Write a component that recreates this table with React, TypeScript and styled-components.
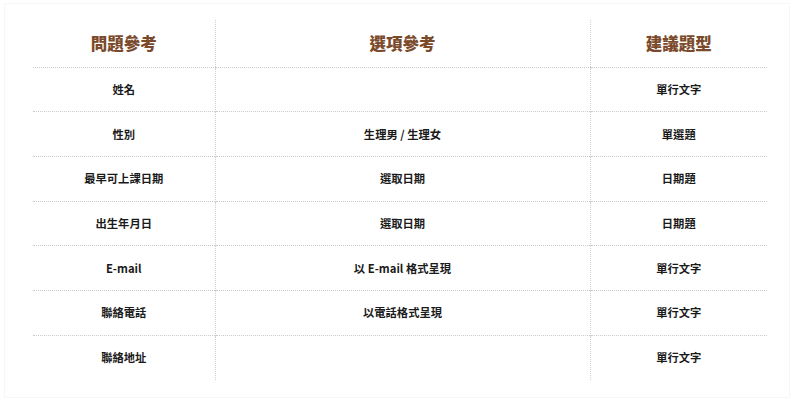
import React from "react";
import styled, { createGlobalStyle } from "styled-components";

const GlobalStyle = createGlobalStyle`
  html, body {
    margin: 0;
    padding: 0;
    background: #ffffff;
  }
  body {
    font-family: "Noto Sans CJK TC", "Noto Sans", sans-serif;
    color: #1a1a1a;
  }
`;

const Card = styled.div`
  box-sizing: border-box;
  width: 786px;
  height: 395px;
  margin: 3px 0 0 4px;
  padding: 16px 0 0 28px;
  border: 1px solid #f6f6f8;
  background: #ffffff;
`;

const Table = styled.table`
  width: 734px;
  border-collapse: collapse;
  table-layout: fixed;
`;

const HeadCell = styled.th<{ $w: number }>`
  width: ${(p) => p.$w}px;
  height: 47px;
  padding: 0 0 1px;
  box-sizing: border-box;
  font-size: 16.5px;
  font-weight: 900;
  color: #7b4a2b;
  text-align: center;
  border-bottom: 1px dotted #cacaca;
  & + & {
    border-left: 1px dotted #d0d0d0;
  }
`;

const Row = styled.tr`
  & + & td {
    border-top: 1px dotted #cacaca;
  }
`;

const Cell = styled.td`
  height: 44.7px;
  padding: 0 0 1px;
  box-sizing: border-box;
  font-size: 11.3px;
  font-weight: 700;
  color: #1a1a1a;
  text-align: center;
  vertical-align: middle;
  & + & {
    border-left: 1px dotted #d0d0d0;
  }
`;

const rows: [string, string, string][] = [
  ["姓名", "", "單行文字"],
  ["性別", "生理男 / 生理女", "單選題"],
  ["最早可上課日期", "選取日期", "日期題"],
  ["出生年月日", "選取日期", "日期題"],
  ["E-mail", "以 E-mail 格式呈現", "單行文字"],
  ["聯絡電話", "以電話格式呈現", "單行文字"],
  ["聯絡地址", "", "單行文字"],
];

export default function App() {
  return (
    <>
      <GlobalStyle />
      <Card>
        <Table>
          <thead>
            <tr>
              <HeadCell $w={182}>問題參考</HeadCell>
              <HeadCell $w={375}>選項參考</HeadCell>
              <HeadCell $w={177}>建議題型</HeadCell>
            </tr>
          </thead>
          <tbody>
            {rows.map((r) => (
              <Row key={r[0]}>
                <Cell>{r[0]}</Cell>
                <Cell>{r[1]}</Cell>
                <Cell>{r[2]}</Cell>
              </Row>
            ))}
          </tbody>
        </Table>
      </Card>
    </>
  );
}
